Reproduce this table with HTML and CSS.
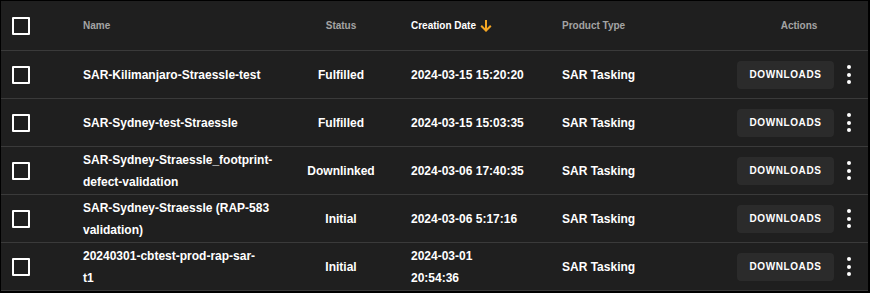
FILE: index.html
```html
<!DOCTYPE html>
<html>
<head>
<meta charset="utf-8">
<link rel="stylesheet" href="styles.css">
</head>
<body>
<div class="table">
  <div class="row head">
    <div class="cell cb"><span class="box"></span></div>
    <div class="cell name">Name</div>
    <div class="cell status">Status</div>
    <div class="cell date active">Creation Date
      <svg class="arrow" width="12" height="13" viewBox="0 0 12 13"><path d="M6 1V11.5M1.2 6.8L6 11.6L10.8 6.8" fill="none" stroke="#f5a623" stroke-width="2"/></svg>
    </div>
    <div class="cell type">Product Type</div>
    <div class="cell actions-h">Actions</div>
  </div>

  <div class="row">
    <div class="cell cb"><span class="box"></span></div>
    <div class="cell name">SAR-Kilimanjaro-Straessle-test</div>
    <div class="cell status">Fulfilled</div>
    <div class="cell date">2024-03-15 15:20:20</div>
    <div class="cell type">SAR Tasking</div>
    <div class="cell btn-cell"><button class="btn">DOWNLOADS</button></div>
    <div class="cell more"><span class="kebab"><i></i><i></i><i></i></span></div>
  </div>

  <div class="row">
    <div class="cell cb"><span class="box"></span></div>
    <div class="cell name">SAR-Sydney-test-Straessle</div>
    <div class="cell status">Fulfilled</div>
    <div class="cell date">2024-03-15 15:03:35</div>
    <div class="cell type">SAR Tasking</div>
    <div class="cell btn-cell"><button class="btn">DOWNLOADS</button></div>
    <div class="cell more"><span class="kebab"><i></i><i></i><i></i></span></div>
  </div>

  <div class="row">
    <div class="cell cb"><span class="box"></span></div>
    <div class="cell name"><span class="ln">SAR-Sydney-Straessle_footprint-</span><span class="ln">defect-validation</span></div>
    <div class="cell status">Downlinked</div>
    <div class="cell date">2024-03-06 17:40:35</div>
    <div class="cell type">SAR Tasking</div>
    <div class="cell btn-cell"><button class="btn">DOWNLOADS</button></div>
    <div class="cell more"><span class="kebab"><i></i><i></i><i></i></span></div>
  </div>

  <div class="row">
    <div class="cell cb"><span class="box"></span></div>
    <div class="cell name"><span class="ln">SAR-Sydney-Straessle (RAP-583</span><span class="ln">validation)</span></div>
    <div class="cell status">Initial</div>
    <div class="cell date">2024-03-06 5:17:16</div>
    <div class="cell type">SAR Tasking</div>
    <div class="cell btn-cell"><button class="btn">DOWNLOADS</button></div>
    <div class="cell more"><span class="kebab"><i></i><i></i><i></i></span></div>
  </div>

  <div class="row">
    <div class="cell cb"><span class="box"></span></div>
    <div class="cell name"><span class="ln">20240301-cbtest-prod-rap-sar-</span><span class="ln">t1</span></div>
    <div class="cell status">Initial</div>
    <div class="cell date"><span class="ln">2024-03-01</span><span class="ln">20:54:36</span></div>
    <div class="cell type">SAR Tasking</div>
    <div class="cell btn-cell"><button class="btn">DOWNLOADS</button></div>
    <div class="cell more"><span class="kebab"><i></i><i></i><i></i></span></div>
  </div>
</div>
</body>
</html>
```

FILE: styles.css
```css
html, body {
  margin: 0;
  padding: 0;
  background: #000;
}
body {
  width: 870px;
  height: 293px;
  overflow: hidden;
  font-family: "Liberation Sans", Arial, sans-serif;
  font-weight: 700;
  color: #fff;
}
.table {
  margin: 1px 2px 0 1px;
  width: 867px;
  background: #1f1f1f;
}
.row {
  display: grid;
  grid-template-columns: 82px 213px 90px 176px 175px 97px 27px;
  height: 47px;
  border-bottom: 1px solid #3a3a3a;
  align-items: center;
  font-size: 12px;
}
.row.head {
  height: 49px;
  font-size: 10px;
  color: #a4a4a4;
}
.cell {
  line-height: 22px;
}
.cb {
  padding-left: 11px;
  display: flex;
  align-items: center;
}
.box {
  display: block;
  width: 14px;
  height: 14px;
  border: 2px solid #fff;
  border-radius: 1px;
}
.ln {
  display: block;
}
.status {
  text-align: center;
}
.date {
  padding-left: 25px;
}
.active {
  color: #fff;
  display: flex;
  align-items: center;
  gap: 4px;
}
.arrow {
  display: block;
  margin-top: -1px;
}
.actions-h {
  grid-column: 6 / 8;
  text-align: center;
}
.btn-cell {
  display: flex;
}
.btn {
  width: 97px;
  height: 28px;
  border: none;
  border-radius: 4px;
  background: #2b2b2b;
  color: #fff;
  font-family: "Liberation Sans", Arial, sans-serif;
  font-weight: 700;
  font-size: 10px;
  letter-spacing: 0.6px;
  padding: 0;
}
.more {
  display: flex;
  justify-content: center;
}
.kebab {
  display: flex;
  flex-direction: column;
  gap: 3.5px;
  margin-left: 2px;
}
.kebab i {
  display: block;
  width: 4px;
  height: 4px;
  border-radius: 50%;
  background: #fff;
}
```
